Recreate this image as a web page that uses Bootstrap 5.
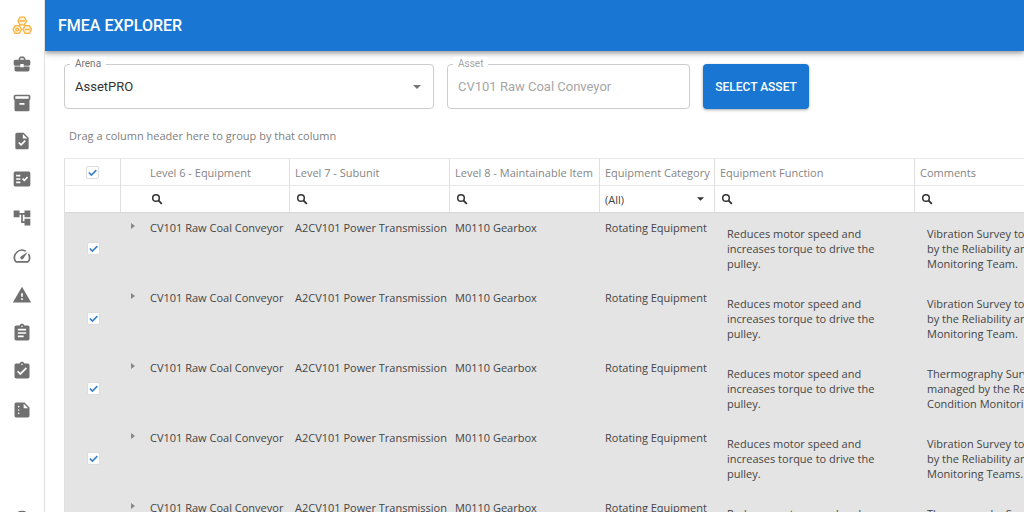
<!DOCTYPE html>
<html lang="en">
<head>
<meta charset="utf-8">
<meta name="viewport" content="width=device-width, initial-scale=1">
<title>FMEA Explorer</title>
<link href="https://cdn.jsdelivr.net/npm/bootstrap@5.3.0/dist/css/bootstrap.min.css" rel="stylesheet">
<style>
  body { font-family: Roboto, "Liberation Sans", sans-serif; color: #333; background: #fff; }
  .side-rail { width: 45px; border-right: 1px solid #e0e0e0; }
  .rail-logo { height: 45px; padding-top: 16px; }
  .rail-links { height: 384px; }
  .rail-links a { color: #707070; }
  .rail-links svg, .rail-user svg { width: 20px; height: 20px; fill: currentColor; display: block; }
  .rail-user { color: #707070; margin-top: 80px; }
  .top-bar { height: 51px; background: #1976d2; box-shadow: 0 2px 4px rgba(0,0,0,.3), 0 3px 8px rgba(0,0,0,.14); padding: 0 13px; }
  .top-bar h1 { font-size: 16px; font-weight: 500; color: #fff; }
  .filters { padding: 13px 19px 0; gap: 13px; }
  .outlined { height: 45px; border: 1px solid #ccc; border-radius: 4px; }
  .outlined label { position: absolute; top: -8px; left: 5px; padding: 0 5px; background: #fff; font-size: 10px; line-height: 14px; color: #757575; }
  .outlined .form-control, .outlined .form-select { border: 0; background-color: transparent; height: 100%; padding: 0 10px; font-size: 13px; color: #333; box-shadow: none; }
  .outlined .form-select { background-image: url("data:image/svg+xml,%3Csvg xmlns='http://www.w3.org/2000/svg' viewBox='0 0 8 4'%3E%3Cpath fill='%23757575' d='M0 0h8L4 4z'/%3E%3C/svg%3E"); background-size: 8px 4px; background-position: right 12px center; }
  .outlined .form-control:disabled, .outlined.is-off label { color: #a6a6a6; }
  .arena-box { width: 370px; }
  .asset-box { width: 243px; }
  .btn-pick { width: 106px; height: 45px; padding: 0; white-space: nowrap; border: 0; border-radius: 4px; background: #1976d2; color: #fff; font-size: 12px; font-weight: 500; box-shadow: 0 1px 3px rgba(0,0,0,.35); }
  .data-area { font-family: "Open Sans", "Noto Sans", sans-serif; font-size: 11px; line-height: 15px; padding-left: 19px; }
  .group-hint { padding: 19px 5px 15px; color: #808080; }
  .fmea-grid { table-layout: fixed; width: 1050px; min-width: 100%; border-collapse: separate; border-spacing: 0; color: #444; border-left: 1px solid #e0e0e0; }
  .fmea-grid th, .fmea-grid td { padding: 0 5px; vertical-align: middle; white-space: nowrap; }
  .fmea-grid thead th, .fmea-grid thead td { height: 27px; border-top: 1px solid #e8e8e8; border-right: 1px solid #e0e0e0; font-weight: 400; color: #858585; }
  .fmea-grid thead .open-end { border-right: 0; }
  .fmea-grid tbody td { height: 70px; background: #e4e4e4; vertical-align: top; padding-top: 8px; }
  .fmea-grid tbody tr:first-child td { box-shadow: inset 0 1px #d8d8d8; }
  .fmea-grid tbody td.note { padding: 14px 12px 0; line-height: 15px; }
  .fmea-grid tbody td.pick { vertical-align: middle; padding-top: 3px; }
  .pick { text-align: center; }
  .pick .form-check-input { width: 13px; height: 13px; border: 1px solid #ddd; border-radius: 2px; background-color: #fff; display: block; margin: 0 auto; box-shadow: none; }
  .pick .form-check-input:checked { background-image: url("data:image/svg+xml,%3Csvg xmlns='http://www.w3.org/2000/svg' viewBox='0 0 12 12'%3E%3Cpath fill='none' stroke='%233480cc' stroke-width='1.7' d='M2 6l2.800 2.800L10.200 3.400'/%3E%3C/svg%3E"); background-size: 100% 100%; }
  .expander { border: 0; background: none; padding: 0; display: block; margin: 0 0 0 5px; width: 4px; height: 12px; line-height: 0; }
  .finder { border: 0; background: none; padding: 0 1px; display: block; }
  .finder svg { width: 12px; height: 12px; display: block; }
  .cat-pick { border: 0; padding: 0; height: 15px; font-size: 11px; line-height: 15px; color: #444; border-radius: 0; background: url("data:image/svg+xml,%3Csvg xmlns='http://www.w3.org/2000/svg' viewBox='0 0 8 4'%3E%3Cpath fill='%23333' d='M0 0h8L4 4z'/%3E%3C/svg%3E") no-repeat right 5px center / 7px 4px; }
</style>
</head>
<body class="vh-100 overflow-hidden d-flex">
<svg class="d-none" aria-hidden="true">
  <symbol id="find" viewBox="0 0 12 12"><circle cx="5" cy="5" r="3.300" fill="none" stroke="#333" stroke-width="1.500"/><path d="M7.400 7.400l3.400 3.400" stroke="#333" stroke-width="1.900"/></symbol>
</svg>

<nav class="side-rail flex-shrink-0 d-flex flex-column align-items-center" aria-label="Main">
  <a class="rail-logo flex-shrink-0" href="#" aria-label="Home">
    <svg width="20" height="20" viewBox="0 0 20 20" fill="#fff3dc" stroke="#fbb03b" stroke-width="1.300" stroke-linejoin="round" class="d-block">
      <path d="M8.100 1.200h4.200l2.200 3.800-2.200 3.800H8.100L5.900 5zM3.100 9.700h4.200l2.200 3.800-2.200 3.800H3.100L.900 13.500zM13.100 9.700h4.200l2.200 3.800-2.200 3.800h-4.200l-2.200-3.800z"/>
      <path d="M7.600 5h5.200M12.600 13.500h5.200"/><circle cx="5.200" cy="13.500" r="1.400"/>
    </svg>
  </a>
  <div class="rail-links flex-shrink-0 d-flex flex-column">
    <a href="#" class="flex-fill d-flex align-items-center" aria-label="Business"><svg viewBox="0 0 24 24"><path d="M10 16v-1H3.010L3 19c0 1.110.890 2 2 2h14c1.110 0 2-.890 2-2v-4h-7v1h-4zm10-9h-4.010V5l-2-2h-4l-2 2v2H4c-1.100 0-2 .900-2 2v3c0 1.110.890 2 2 2h6v-2h4v2h6c1.100 0 2-.900 2-2V9c0-1.100-.900-2-2-2zm-6 0h-4V5h4v2z"/></svg></a>
    <a href="#" class="flex-fill d-flex align-items-center" aria-label="Inventory"><svg viewBox="0 0 24 24"><path d="M20 2H4c-1 0-2 .9-2 2v3.010c0 .720.430 1.340 1 1.690V20c0 1.100 1.100 2 2 2h14c.900 0 2-.900 2-2V8.700c.570-.350 1-.970 1-1.690V4c0-1.100-1-2-2-2zm-5 12H9v-2h6v2zm5-7H4V4h16v3z"/></svg></a>
    <a href="#" class="flex-fill d-flex align-items-center" aria-label="Tasks"><svg viewBox="0 0 24 24"><path d="M14 2H6c-1.100 0-1.990.900-1.990 2L4 20c0 1.100.890 2 1.990 2H18c1.100 0 2-.900 2-2V8l-6-6zm-3.060 16L7.400 14.460l1.410-1.410 2.120 2.120 4.240-4.240 1.410 1.410L10.940 18zM13 9V3.500L18.500 9H13z"/></svg></a>
    <a href="#" class="flex-fill d-flex align-items-center" aria-label="Checks"><svg viewBox="0 0 24 24"><path fill-rule="evenodd" d="M20 3H4c-1.100 0-2 .900-2 2v14c0 1.100.900 2 2 2h16c1.100 0 2-.900 2-2V5c0-1.100-.900-2-2-2zM10 17H5v-2h5v2zm0-4H5v-2h5v2zm0-4H5V7h5v2zm4.820 6L12 12.160l1.410-1.410 1.410 1.420L17.990 9l1.420 1.420L14.820 15z"/></svg></a>
    <a href="#" class="flex-fill d-flex align-items-center" aria-label="Hierarchy"><svg viewBox="0 0 24 24"><path d="M22 11V3h-7v3H9V3H2v8h7V8h2v10h4v3h7v-8h-7v3h-2V8h2v3z"/></svg></a>
    <a href="#" class="flex-fill d-flex align-items-center" aria-label="Performance"><svg viewBox="0 0 24 24"><path d="M20.380 8.570l-1.230 1.850a8 8 0 0 1-.220 7.580H5.070A8 8 0 0 1 15.580 6.850l1.850-1.230A10 10 0 0 0 3.350 19a2 2 0 0 0 1.720 1h13.850a2 2 0 0 0 1.740-1 10 10 0 0 0-.270-10.440zM10.590 15.410a2 2 0 0 0 2.830 0l5.660-8.490-8.490 5.660a2 2 0 0 0 0 2.830z"/></svg></a>
    <a href="#" class="flex-fill d-flex align-items-center" aria-label="Warnings"><svg viewBox="0 0 24 24"><path d="M1 21h22L12 2 1 21zm12-3h-2v-2h2v2zm0-4h-2v-4h2v4z"/></svg></a>
    <a href="#" class="flex-fill d-flex align-items-center" aria-label="Assignments"><svg viewBox="0 0 24 24"><path d="M19 3h-4.180C14.400 1.840 13.300 1 12 1c-1.300 0-2.400.840-2.820 2H5c-1.100 0-2 .900-2 2v14c0 1.100.900 2 2 2h14c1.100 0 2-.900 2-2V5c0-1.100-.900-2-2-2zm-7 0c.550 0 1 .450 1 1s-.450 1-1 1-1-.450-1-1 .450-1 1-1zm2 14H7v-2h7v2zm3-4H7v-2h10v2zm0-4H7V7h10v2z"/></svg></a>
    <a href="#" class="flex-fill d-flex align-items-center" aria-label="Completed"><svg viewBox="0 0 24 24"><path d="M19 3h-4.180C14.400 1.840 13.300 1 12 1c-1.300 0-2.400.840-2.820 2H5c-1.100 0-2 .900-2 2v14c0 1.100.900 2 2 2h14c1.100 0 2-.900 2-2V5c0-1.100-.900-2-2-2zm-7 0c.550 0 1 .450 1 1s-.450 1-1 1-1-.450-1-1 .450-1 1-1zm-2 14l-4-4 1.410-1.410L10 14.170l6.590-6.590L18 9l-8 8z"/></svg></a>
    <a href="#" class="flex-fill d-flex align-items-center" aria-label="Summary"><svg viewBox="0 0 24 24"><path d="M15 3H5c-1.100 0-1.990.900-1.990 2L3 19c0 1.100.890 2 1.990 2H19c1.100 0 2-.900 2-2V9l-6-6zM8 17c-.550 0-1-.450-1-1s.450-1 1-1 1 .450 1 1-.450 1-1 1zm0-4c-.550 0-1-.450-1-1s.450-1 1-1 1 .450 1 1-.450 1-1 1zm0-4c-.550 0-1-.450-1-1s.450-1 1-1 1 .450 1 1-.450 1-1 1zm6 1V4.500l5.500 5.500H14z"/></svg></a>
  </div>
  <a class="rail-user flex-shrink-0" href="#" aria-label="Account"><svg viewBox="0 0 24 24"><circle cx="12" cy="12" r="10"/></svg></a>
</nav>

<main class="flex-grow-1 overflow-hidden">
  <header class="top-bar d-flex align-items-center"><h1 class="m-0">FMEA EXPLORER</h1></header>

  <form class="filters d-flex">
    <div class="outlined arena-box position-relative">
      <label for="arena">Arena</label>
      <select id="arena" class="form-select"><option>AssetPRO</option></select>
    </div>
    <div class="outlined asset-box is-off position-relative">
      <label for="asset">Asset</label>
      <input id="asset" class="form-control" type="text" value="CV101 Raw Coal Conveyor" disabled>
    </div>
    <button type="button" class="btn btn-pick">SELECT ASSET</button>
  </form>

  <section class="data-area">
    <div class="group-hint">Drag a column header here to group by that column</div>
    <table class="fmea-grid">
      <colgroup><col style="width:56px"><col style="width:24px"><col style="width:145px"><col style="width:160px"><col style="width:150px"><col style="width:115px"><col style="width:200px"><col style="width:200px"></colgroup>
      <thead>
        <tr>
          <th class="pick"><input class="form-check-input" type="checkbox" checked aria-label="Select all"></th>
          <th class="open-end"></th><th>Level 6 - Equipment</th><th>Level 7 - Subunit</th><th>Level 8 - Maintainable Item</th><th>Equipment Category</th><th>Equipment Function</th><th>Comments</th>
        </tr>
        <tr>
          <td></td><td class="open-end"></td>
          <td><button type="button" class="finder" aria-label="Search equipment"><svg><use href="#find"/></svg></button></td>
          <td><button type="button" class="finder" aria-label="Search subunit"><svg><use href="#find"/></svg></button></td>
          <td><button type="button" class="finder" aria-label="Search item"><svg><use href="#find"/></svg></button></td>
          <td><select class="form-select cat-pick" aria-label="Equipment category"><option>(All)</option></select></td>
          <td><button type="button" class="finder" aria-label="Search function"><svg><use href="#find"/></svg></button></td>
          <td><button type="button" class="finder" aria-label="Search comments"><svg><use href="#find"/></svg></button></td>
        </tr>
      </thead>
      <tbody id="rows"></tbody>
    </table>
  </section>
</main>

<script src="https://cdn.jsdelivr.net/npm/bootstrap@5.3.0/dist/js/bootstrap.bundle.min.js"></script>
<script>
  const vibration = end => `Vibration Survey to be managed<br>by the Reliability and Condition<br>Monitoring ${end}.`;
  const thermography = "Thermography Survey to be<br>managed by the Reliability and<br>Condition Monitoring Team.";
  const comments = [vibration("Team"), vibration("Team"), thermography, vibration("Teams"), thermography];
  document.getElementById("rows").innerHTML = comments.map((c, i) => `
    <tr>
      <td class="pick"><input class="form-check-input" type="checkbox" checked aria-label="Select row ${i + 1}"></td>
      <td><button type="button" class="expander" aria-label="Expand row ${i + 1}"><svg width="4" height="6" viewBox="0 0 4 6"><path fill="#888" d="M0 0l4 3-4 3z"/></svg></button></td>
      <td>CV101 Raw Coal Conveyor</td><td>A2CV101 Power Transmission</td><td>M0110 Gearbox</td><td>Rotating Equipment</td>
      <td class="note">Reduces motor speed and<br>increases torque to drive the<br>pulley.</td>
      <td class="note">${c}</td>
    </tr>`).join("");
</script>
</body>
</html>
